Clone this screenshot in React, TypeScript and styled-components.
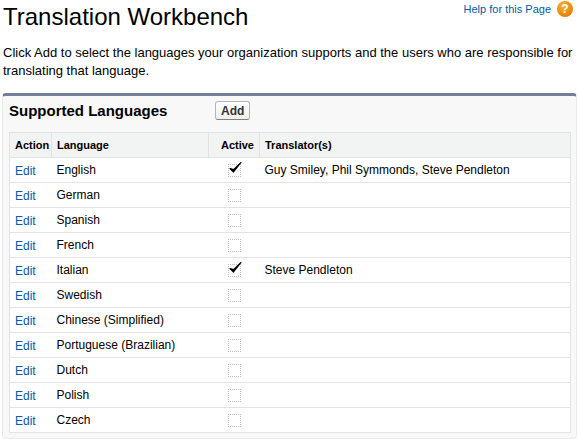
import React from 'react';
import styled, { createGlobalStyle } from 'styled-components';

const GlobalStyle = createGlobalStyle`
  html, body {
    margin: 0;
    padding: 0;
    background: #fff;
    font-family: Arial, "Liberation Sans", Helvetica, sans-serif;
    color: #000;
  }
`;

const Page = styled.div`
  width: 578px;
  padding: 0 1px 0 2px;
  box-sizing: border-box;
`;

const TitleBar = styled.div`
  display: flex;
  justify-content: space-between;
  align-items: flex-start;
  padding: 2px 0 0 1px;
`;

const Title = styled.h1`
  margin: 0;
  font-size: 24px;
  font-weight: normal;
  line-height: 30px;
`;

const HelpLink = styled.a`
  display: flex;
  align-items: center;
  gap: 6px;
  margin-top: -1px;
  margin-right: 4px;
  font-size: 11px;
  color: #015ba7;
  text-decoration: none;
`;

const HelpIcon = styled.span`
  width: 16px;
  height: 16px;
  border-radius: 50%;
  background: radial-gradient(circle at 40% 30%, #f7b23c 0%, #e88a0c 60%, #c86a00 100%);
  color: #fff;
  font-weight: bold;
  font-size: 12px;
  line-height: 16px;
  text-align: center;
`;

const Intro = styled.p`
  margin: 12px 0 0 1px;
  font-size: 13px;
  line-height: 18px;
  color: #000;
`;

const Panel = styled.div`
  margin-top: 13px;
  background: #f8f8f8;
  border: 1px solid #eaeaea;
  border-top: 3px solid #747e96;
  border-radius: 4px;
  padding: 0 5px 5px 6px;
`;

const PanelHeader = styled.div`
  display: flex;
  align-items: center;
  height: 29px;
  margin-bottom: 7px;
`;

const PanelTitle = styled.h2`
  margin: 0;
  width: 206px;
  font-size: 15px;
  font-weight: bold;
  color: #000;
`;

const Button = styled.button`
  font-family: inherit;
  font-size: 12px;
  font-weight: bold;
  color: #333;
  padding: 0 5px;
  height: 19px;
  border: 1px solid #b5b5b5;
  border-bottom-color: #7f7f7f;
  border-radius: 3px;
  background: linear-gradient(#fff, #f0f0f0);
`;

const Table = styled.table`
  width: 100%;
  table-layout: fixed;
  border-collapse: collapse;
  background: #fff;
  border: 1px solid #e0e3e5;
`;

const Th = styled.th<{ $align?: string }>`
  background: #f2f3f3;
  border: 1px solid #e0e3e5;
  font-size: 11px;
  font-weight: bold;
  color: #000;
  text-align: ${p => p.$align || 'left'};
  padding: 5px 5px 5px 5px;
  height: 14px;
  white-space: nowrap;
`;

const Td = styled.td<{ $align?: string }>`
  border-bottom: 1px solid #e3e3e3;
  font-size: 12px;
  color: #000;
  text-align: ${p => p.$align || 'left'};
  padding: 4px 5px 4px 5px;
  height: 16px;
  vertical-align: middle;
  white-space: nowrap;
`;

const EditLink = styled.a`
  color: #015ba7;
  text-decoration: none;
  font-size: 12px;
  position: relative;
  top: 1px;
`;

const CheckBox = styled.span`
  display: inline-block;
  position: relative;
  width: 11px;
  height: 11px;
  border: 1px dotted #bdbdbd;
  vertical-align: middle;
`;

const Tick = styled.svg`
  position: absolute;
  left: -1px;
  top: -5px;
`;

const rows: { lang: string; active: boolean; who?: string }[] = [
  { lang: 'English', active: true, who: 'Guy Smiley, Phil Symmonds, Steve Pendleton' },
  { lang: 'German', active: false },
  { lang: 'Spanish', active: false },
  { lang: 'French', active: false },
  { lang: 'Italian', active: true, who: 'Steve Pendleton' },
  { lang: 'Swedish', active: false },
  { lang: 'Chinese (Simplified)', active: false },
  { lang: 'Portuguese (Brazilian)', active: false },
  { lang: 'Dutch', active: false },
  { lang: 'Polish', active: false },
  { lang: 'Czech', active: false },
];

export default function App() {
  return (
    <>
      <GlobalStyle />
      <Page>
        <TitleBar>
          <Title>Translation Workbench</Title>
          <HelpLink href="#">
            Help for this Page
            <HelpIcon>?</HelpIcon>
          </HelpLink>
        </TitleBar>
        <Intro>
          Click Add to select the languages your organization supports and the users who are responsible for
          translating that language.
        </Intro>
        <Panel>
          <PanelHeader>
            <PanelTitle>Supported Languages</PanelTitle>
            <Button>Add</Button>
          </PanelHeader>
          <Table>
            <colgroup>
              <col style={{ width: 42 }} />
              <col style={{ width: 157 }} />
              <col style={{ width: 51 }} />
              <col />
            </colgroup>
            <thead>
              <tr>
                <Th>Action</Th>
                <Th>Language</Th>
                <Th $align="right">Active</Th>
                <Th>Translator(s)</Th>
              </tr>
            </thead>
            <tbody>
              {rows.map(r => (
                <tr key={r.lang}>
                  <Td><EditLink href="#">Edit</EditLink></Td>
                  <Td>{r.lang}</Td>
                  <Td $align="center">
                    <CheckBox>
                      {r.active && (
                        <Tick width="15" height="15" viewBox="0 0 15 15">
                          <path d="M2 8.5 L5.5 12 L13 2.5 L5.6 9.6 Z" fill="#000" stroke="#000" strokeWidth="1.2" strokeLinejoin="round" />
                        </Tick>
                      )}
                    </CheckBox>
                  </Td>
                  <Td>{r.who || ''}</Td>
                </tr>
              ))}
            </tbody>
          </Table>
        </Panel>
      </Page>
    </>
  );
}
